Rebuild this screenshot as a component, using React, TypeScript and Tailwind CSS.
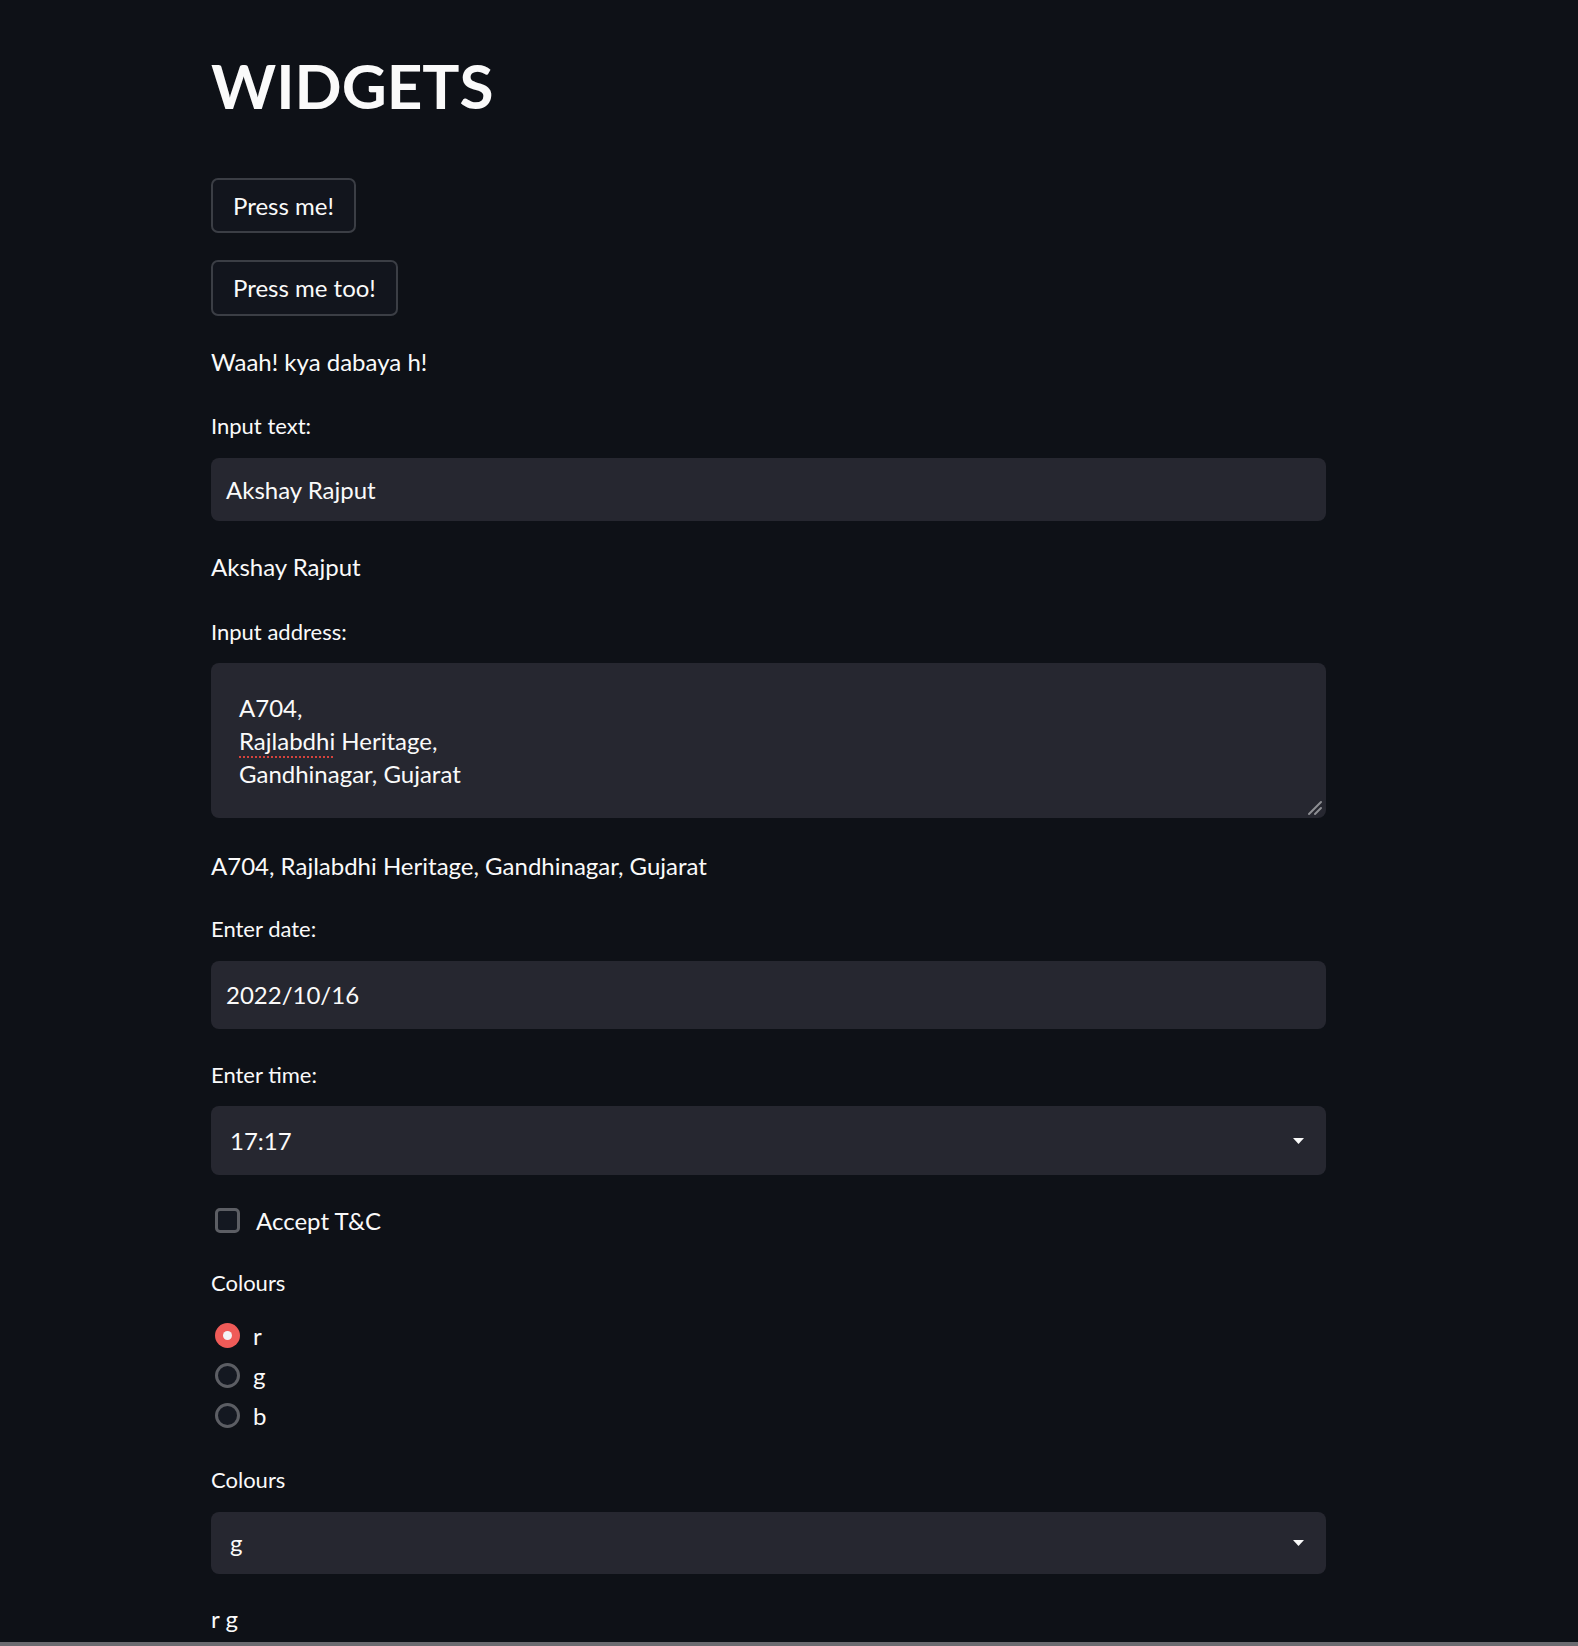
const font = { fontFamily: '"Lato", "Noto Sans", sans-serif' };

function Label({ text, className = '' }: { text: string; className?: string }) {
  return (
    <div className={`h-[28px] flex items-center text-[22px] text-[#fafafa] ${className}`}>{text}</div>
  );
}

function Caret() {
  return (
    <svg width="11" height="6" viewBox="0 0 11 6" className="shrink-0">
      <path d="M0 0 L11 0 L5.5 6 Z" fill="#fafafa" />
    </svg>
  );
}

function Radio({ label, checked }: { label: string; checked?: boolean }) {
  return (
    <div className="h-[25px] flex items-center gap-[13px]">
      {checked ? (
        <span className="w-[25px] h-[25px] rounded-full bg-[#ef5b58] flex items-center justify-center">
          <span className="w-[9px] h-[9px] rounded-full bg-[#f3f3f5]"></span>
        </span>
      ) : (
        <span className="w-[25px] h-[25px] rounded-full border-[3px] border-[#5c5e64] bg-[#141821]"></span>
      )}
      <span className="text-[24px] leading-none">{label}</span>
    </div>
  );
}

export default function App() {
  return (
    <div className="min-h-screen bg-[#0e1117] text-[#fafafa] flex flex-col" style={font}>
      <div className="ml-[211px] w-[1115px] flex flex-col">
        <h1 className="mt-[45px] h-[80px] flex items-center text-[62px] font-bold leading-none">WIDGETS</h1>

        <div className="mt-[53px]">
          <button className="h-[55px] px-[20px] rounded-[7px] border-2 border-[#3b3e45] bg-[#12151d] text-[24px] text-[#fafafa]">
            Press me!
          </button>
        </div>
        <div className="mt-[27px]">
          <button className="h-[56px] px-[20px] rounded-[7px] border-2 border-[#3b3e45] bg-[#12151d] text-[24px] text-[#fafafa]">
            Press me too!
          </button>
        </div>

        <div className="mt-[31px] h-[30px] flex items-center text-[24px]">Waah! kya dabaya h!</div>

        <Label text="Input text:" className="mt-[34px]" />
        <div className="mt-[19px] h-[63px] rounded-[8px] bg-[#262730] flex items-center pl-[15px] text-[24px]">
          Akshay Rajput
        </div>

        <div className="mt-[31px] h-[30px] flex items-center text-[24px]">Akshay Rajput</div>

        <Label text="Input address:" className="mt-[35px]" />
        <div className="mt-[18px] h-[155px] rounded-[8px] bg-[#262730] relative pl-[28px] pt-[28px] text-[24px] leading-[33px]">
          <div>A704,</div>
          <div>
            <span className="underline decoration-dotted decoration-[#d5433d] decoration-2 underline-offset-[6px]">Rajlabdhi</span> Heritage,
          </div>
          <div>Gandhinagar, Gujarat</div>
          <svg width="16" height="16" viewBox="0 0 16 16" className="absolute right-[3px] bottom-[2px]">
            <path d="M2 14 L14 2 M8 14 L14 8" stroke="#8d8e93" strokeWidth="2" strokeLinecap="round" />
          </svg>
        </div>

        <div className="mt-[33px] h-[30px] flex items-center text-[24px]">A704, Rajlabdhi Heritage, Gandhinagar, Gujarat</div>

        <Label text="Enter date:" className="mt-[33px]" />
        <div className="mt-[19px] h-[68px] rounded-[8px] bg-[#262730] flex items-center pl-[15px] text-[24px]">
          2022/10/16
        </div>

        <Label text="Enter time:" className="mt-[31px]" />
        <div className="mt-[18px] h-[69px] rounded-[8px] bg-[#262730] flex items-center justify-between pl-[19px] pr-[22px] text-[24px]">
          <span>17:17</span>
          <Caret />
        </div>

        <div className="mt-[33px] h-[25px] flex items-center gap-[16px]">
          <span className="ml-[4px] w-[25px] h-[25px] rounded-[5px] border-[3px] border-[#5c5e64] bg-[#141821]"></span>
          <span className="text-[24px] leading-none">Accept T&amp;C</span>
        </div>

        <Label text="Colours" className="mt-[35px]" />
        <div className="mt-[27px] ml-[4px] flex flex-col gap-[15px]">
          <Radio label="r" checked />
          <Radio label="g" />
          <Radio label="b" />
        </div>

        <Label text="Colours" className="mt-[37px]" />
        <div className="mt-[19px] h-[62px] rounded-[8px] bg-[#262730] flex items-center justify-between pl-[19px] pr-[22px] text-[24px]">
          <span>g</span>
          <Caret />
        </div>

        <div className="mt-[30px] h-[30px] flex items-center text-[24px]">r g</div>
      </div>
      <div className="mt-auto h-[4px] bg-[#6b6b70]"></div>
    </div>
  );
}
